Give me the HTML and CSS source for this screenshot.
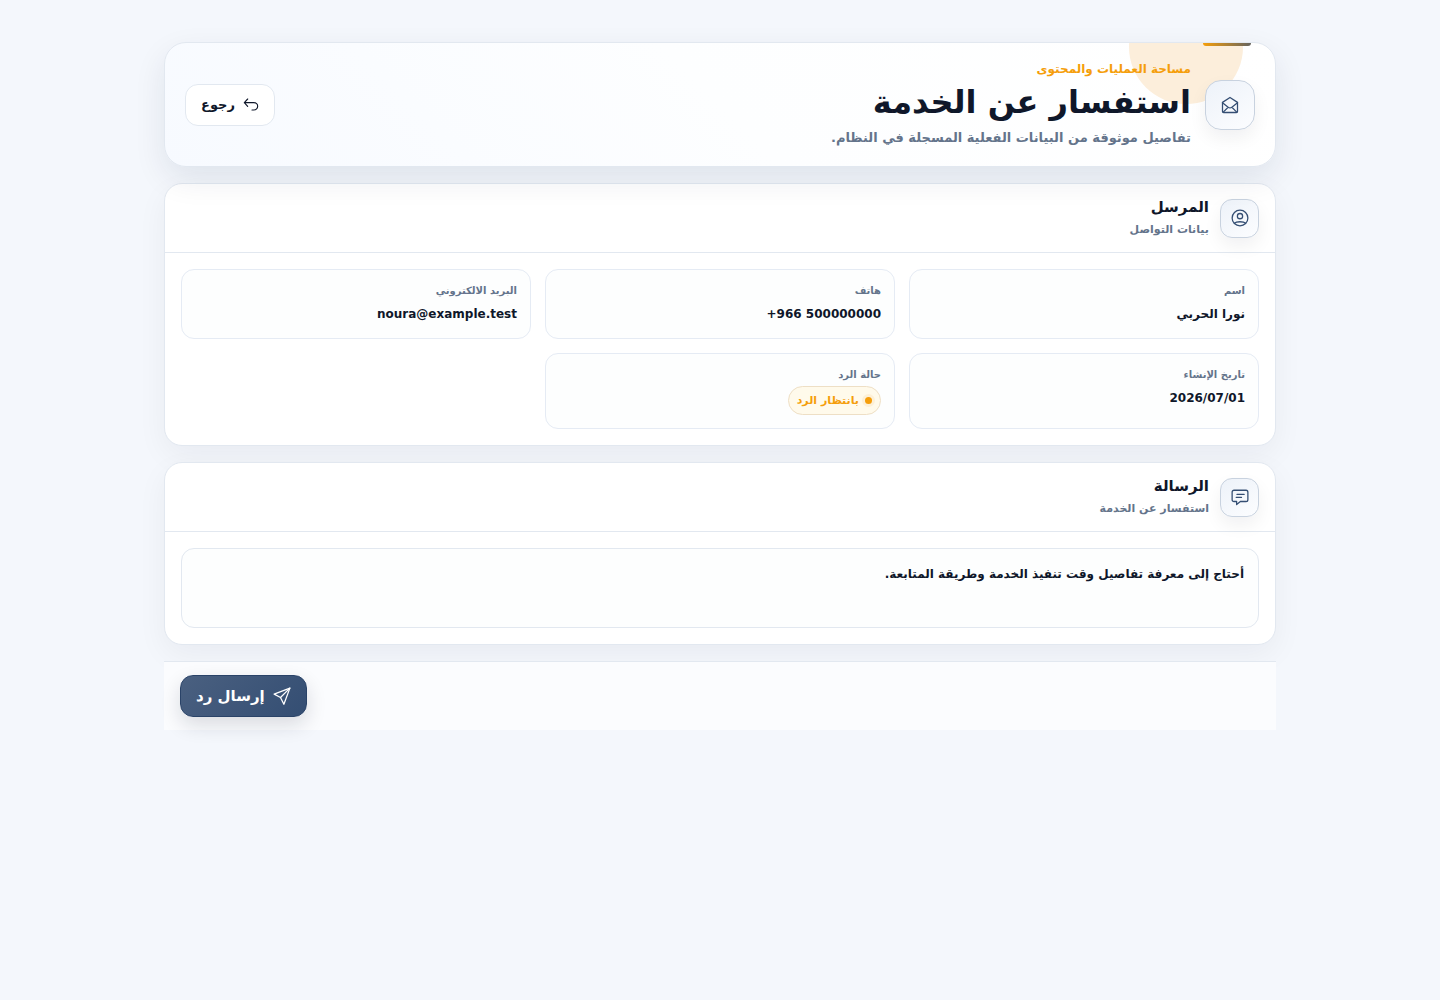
FILE: index.html
```html
<!DOCTYPE html>
<html lang="ar" dir="rtl">
<head>
    <meta charset="UTF-8">
    <meta name="viewport" content="width=device-width, initial-scale=1.0">
    <title>استفسار عن الخدمة</title>
    <link rel="stylesheet" href="styles.css">
</head>
<body>
    <main class="page">
        <header class="hero">
            <div class="hero-main">
                <span class="icon-box icon-box-lg">
                    <svg class="icon" viewBox="0 0 24 24" aria-hidden="true">
                        <path d="M2 8.5 12 2l10 6.5V20.500a1.500 1.500 0 0 1-1.500 1.500h-17A1.500 1.500 0 0 1 2 20.500z"/>
                        <path d="m2 9 7.500 6c1.500 1 3.500 1 5 0L22 9M3 21.500l6.500-6.500M21 21.500l-6.500-6.500"/>
                    </svg>
                </span>
                <div class="hero-text">
                    <p class="eyebrow">مساحة العمليات والمحتوى</p>
                    <h1>استفسار عن الخدمة</h1>
                    <p class="hero-subtitle">تفاصيل موثوقة من البيانات الفعلية المسجلة في النظام.</p>
                </div>
            </div>
            <a class="back-link" href="#">
                <svg class="icon icon-sm" viewBox="0 0 24 24" aria-hidden="true">
                    <path d="M7 3 2 8.500l5 5.500M2 8.500h14.500a5.500 5.500 0 0 1 0 11H13.500"/>
                </svg>
                رجوع
            </a>
        </header>

        <section class="card">
            <div class="card-header">
                <span class="icon-box">
                    <svg class="icon" viewBox="0 0 24 24" aria-hidden="true">
                        <circle cx="12" cy="12" r="10.500"/>
                        <circle cx="12" cy="9.500" r="3.500"/>
                        <path d="M4.500 19c1.500-1.500 4-2 7.500-2s6 .5 7.500 2"/>
                    </svg>
                </span>
                <div>
                    <h2>المرسل</h2>
                    <p class="card-subtitle">بيانات التواصل</p>
                </div>
            </div>
            <dl class="fields">
                <div class="field">
                    <dt>اسم</dt>
                    <dd>نورا الحربي</dd>
                </div>
                <div class="field">
                    <dt>هاتف</dt>
                    <dd><bdi dir="ltr">+966 500000000</bdi></dd>
                </div>
                <div class="field">
                    <dt>البريد الالكتروني</dt>
                    <dd>noura@example.test</dd>
                </div>
                <div class="field">
                    <dt>تاريخ الإنشاء</dt>
                    <dd>2026/07/01</dd>
                </div>
                <div class="field">
                    <dt>حالة الرد</dt>
                    <dd><span class="status">بانتظار الرد</span></dd>
                </div>
            </dl>
        </section>

        <section class="card">
            <div class="card-header">
                <span class="icon-box">
                    <svg class="icon" viewBox="0 0 24 24" aria-hidden="true">
                        <path d="M4 3h16a2.500 2.500 0 0 1 2.500 2.500v10A2.500 2.500 0 0 1 20 18h-7.500L7.500 22v-4H4a2.500 2.500 0 0 1-2.500-2.500v-10A2.500 2.500 0 0 1 4 3z"/>
                        <path d="M8 8.500h9.500M7 12.500h7"/>
                    </svg>
                </span>
                <div>
                    <h2>الرسالة</h2>
                    <p class="card-subtitle">استفسار عن الخدمة</p>
                </div>
            </div>
            <div class="card-body">
                <p class="message">أحتاج إلى معرفة تفاصيل وقت تنفيذ الخدمة وطريقة المتابعة.</p>
            </div>
        </section>

        <footer class="actions">
            <button class="send-button" type="button">
                <svg class="icon" viewBox="0 0 24 24" aria-hidden="true">
                    <path d="M22.500 1.500 1.500 9.500l8.500 4.500 4.500 9z"/>
                    <path d="M22.500 1.500 10 14"/>
                </svg>
                إرسال رد
            </button>
        </footer>
    </main>
</body>
</html>
```

FILE: styles.css
```css
* {
    margin: 0;
    padding: 0;
    box-sizing: border-box;
}

body {
    font-family: "DejaVu Sans", sans-serif;
    font-weight: 700;
    background: #f4f7fc;
    min-height: 100vh;
    color: #0f172a;
}

.page {
    max-width: 1160px;
    margin: 0 auto;
    padding: 42px 24px;
    display: flex;
    flex-direction: column;
    gap: 16px;
}

.icon {
    width: 18px;
    height: 18px;
    flex: none;
    fill: none;
    stroke: currentColor;
    stroke-width: 1.7;
    stroke-linecap: round;
    stroke-linejoin: round;
}

.icon-sm {
    width: 16px;
    height: 16px;
}

.icon-box {
    width: 39px;
    height: 39px;
    flex: none;
    display: grid;
    place-items: center;
    color: #344e73;
    background: linear-gradient(145deg, #edf2f9, #fcfdff);
    border: 1px solid #c8d2df;
    border-radius: 12px;
    box-shadow: 0 8px 18px rgba(15, 23, 42, 0.06);
}

.icon-box-lg {
    width: 50px;
    height: 50px;
    border-radius: 16px;
}

.hero {
    position: relative;
    overflow: hidden;
    display: flex;
    align-items: center;
    justify-content: space-between;
    padding: 16px 20px;
    background: linear-gradient(225deg, #ffffff 0%, #fdfeff 50%, #f7faff 100%);
    border: 1px solid #e2e8f0;
    border-radius: 22px;
    box-shadow: 0 12px 32px rgba(15, 35, 70, 0.09);
}

/* accent circle and tab along the top edge */
.hero::before {
    content: "";
    position: absolute;
    top: -53px;
    right: 32px;
    width: 114px;
    height: 114px;
    border-radius: 50%;
    background: #fceedb;
}

.hero::after {
    content: "";
    position: absolute;
    top: 0;
    right: 24px;
    width: 48px;
    height: 3px;
    border-radius: 0 0 4px 4px;
    background: linear-gradient(90deg, #f59e0b, #66645f);
}

.hero-main {
    position: relative;
    display: flex;
    align-items: center;
    gap: 14px;
}

.eyebrow {
    font-size: 12px;
    line-height: 20px;
    color: #f59e0b;
}

h1 {
    font-size: 32px;
    line-height: 47px;
}

.hero-subtitle {
    font-size: 13px;
    line-height: 24px;
    color: #64748b;
}

.back-link {
    position: relative;
    display: flex;
    align-items: center;
    gap: 8px;
    height: 42px;
    padding: 0 15px;
    font-size: 13px;
    color: inherit;
    text-decoration: none;
    background: #ffffff;
    border: 1px solid #e2e8f0;
    border-radius: 13px;
}

.card {
    background: #ffffff;
    border: 1px solid #e2e8f0;
    border-radius: 18px;
    box-shadow: 0 10px 30px rgba(15, 23, 42, 0.05);
}

.card-header {
    display: flex;
    align-items: center;
    gap: 11px;
    padding: 11px 16px;
    border-bottom: 1px solid #e2e8f0;
}

h2 {
    font-size: 15px;
    line-height: 24px;
}

.card-subtitle {
    font-size: 11px;
    line-height: 22px;
    color: #64748b;
}

.fields {
    display: grid;
    grid-template-columns: repeat(3, 1fr);
    gap: 14px;
    padding: 16px;
}

.field {
    padding: 11px 13px;
    background: #fdfefe;
    border: 1px solid #e5ebf4;
    border-radius: 13px;
}

.field dt {
    font-size: 10px;
    line-height: 20px;
    color: #64748b;
}

.field dd {
    font-size: 12px;
    line-height: 26px;
}

.status {
    display: inline-flex;
    align-items: center;
    gap: 6px;
    margin: 1px 0 2px;
    padding: 0 8px;
    vertical-align: top;
    font-size: 11px;
    line-height: 27px;
    color: #f59e0b;
    background: #fffaeb;
    border: 1px solid #eedfc5;
    border-radius: 15px;
}

.status::before {
    content: "";
    width: 7px;
    height: 7px;
    border-radius: 50%;
    background: #f59e0b;
    box-shadow: 0 0 0 3px #fdf0d7;
}

.card-body {
    padding: 16px;
}

.message {
    min-height: 80px;
    padding: 12px 14px;
    font-size: 12px;
    line-height: 26px;
    background: #fdfefe;
    border: 1px solid #e2e8f0;
    border-radius: 13px;
}

.actions {
    display: flex;
    justify-content: flex-end;
    padding: 13px 16px;
    background: #fbfcfe;
    border-top: 1px solid #e2e8f0;
}

.send-button {
    display: flex;
    align-items: center;
    gap: 8px;
    height: 42px;
    padding: 0 15px;
    font: inherit;
    font-size: 15px;
    color: #ffffff;
    background: linear-gradient(135deg, #4a6080, #344e73);
    border: 1px solid #2a4368;
    border-radius: 13px;
    box-shadow: 0 8px 20px rgba(15, 23, 42, 0.14);
    cursor: pointer;
}
```
